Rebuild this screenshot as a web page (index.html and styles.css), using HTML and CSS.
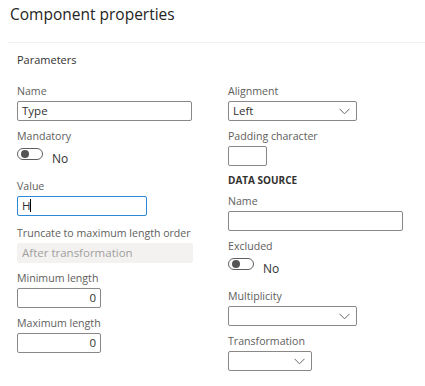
FILE: index.html
```html
<!DOCTYPE html>
<html lang="en">
<head>
    <meta charset="UTF-8">
    <meta name="viewport" content="width=device-width, initial-scale=1.0">
    <title>Component properties</title>
    <link rel="stylesheet" href="styles.css">
</head>
<body>
    <header class="pane-header">
        <h1>Component properties</h1>
    </header>

    <section class="params">
        <h2>Parameters</h2>
        <div class="columns">
            <div class="col">
                <div class="field">
                    <label>Name</label>
                    <div class="input w-name">Type</div>
                </div>
                <div class="field">
                    <label>Mandatory</label>
                    <div class="toggle-row">
                        <span class="toggle"><span class="knob"></span></span>
                        <span class="toggle-text">No</span>
                    </div>
                </div>
                <div class="field field-value">
                    <label>Value</label>
                    <div class="input focused w-value">H<span class="caret"></span></div>
                </div>
                <div class="field">
                    <label>Truncate to maximum length order</label>
                    <div class="input disabled w-trunc">After transformation</div>
                </div>
                <div class="field">
                    <label>Minimum length</label>
                    <div class="input number w-num">0</div>
                </div>
                <div class="field">
                    <label>Maximum length</label>
                    <div class="input number w-num">0</div>
                </div>
            </div>

            <div class="col">
                <div class="field">
                    <label>Alignment</label>
                    <div class="input select w-select">Left
                        <svg class="chevron" width="11" height="7" viewBox="0 0 11 7"><polyline points="0.5,0.8 5.5,5.8 10.5,0.8" fill="none" stroke="#666" stroke-width="1"/></svg>
                    </div>
                </div>
                <div class="field">
                    <label>Padding character</label>
                    <div class="input w-pad"></div>
                </div>
                <h3>DATA SOURCE</h3>
                <div class="field">
                    <label>Name</label>
                    <div class="input w-name"></div>
                </div>
                <div class="field">
                    <label>Excluded</label>
                    <div class="toggle-row">
                        <span class="toggle"><span class="knob"></span></span>
                        <span class="toggle-text">No</span>
                    </div>
                </div>
                <div class="field">
                    <label>Multiplicity</label>
                    <div class="input select w-select">
                        <svg class="chevron" width="11" height="7" viewBox="0 0 11 7"><polyline points="0.5,0.8 5.5,5.8 10.5,0.8" fill="none" stroke="#666" stroke-width="1"/></svg>
                    </div>
                </div>
                <div class="field">
                    <label>Transformation</label>
                    <div class="input select w-num">
                        <svg class="chevron" width="11" height="7" viewBox="0 0 11 7"><polyline points="0.5,0.8 5.5,5.8 10.5,0.8" fill="none" stroke="#666" stroke-width="1"/></svg>
                    </div>
                </div>
            </div>
        </div>
    </section>
</body>
</html>
```

FILE: styles.css
```css
body {
    margin: 0;
    font-family: "Open Sans", "Noto Sans", sans-serif;
    color: #323130;
    background-color: #fff;
}
.pane-header {
    margin-left: 8px;
    height: 42px;
    border-bottom: 1px solid #f0f0f0;
}
.pane-header h1 {
    margin: 0;
    padding: 3px 0 0 2px;
    font-size: 15.5px;
    font-weight: normal;
    line-height: 22px;
    color: #252423;
}
.params h2 {
    margin: 9px 0 0 17px;
    font-size: 11px;
    font-weight: normal;
    line-height: 16px;
    color: #323130;
}
.columns {
    display: grid;
    grid-template-columns: 211px 1fr;
    padding-left: 17px;
    margin-top: 15px;
}
.field {
    margin-bottom: 7px;
}
.field-value {
    margin-bottom: 9px;
}
.field label {
    display: block;
    font-size: 10.6px;
    line-height: 16px;
    margin-bottom: 2px;
    color: #605e5c;
}
.input {
    position: relative;
    box-sizing: border-box;
    height: 20px;
    border: 1px solid #8a8886;
    border-radius: 2px;
    padding: 0 4px;
    font-size: 11.5px;
    line-height: 18px;
    color: #323130;
}
.input.focused {
    border-color: #2b88d8;
}
.input.disabled {
    border-color: #f3f2f1;
    background-color: #f3f2f1;
    color: #a19f9d;
}
.input.number {
    text-align: right;
}
.caret {
    display: inline-block;
    width: 1px;
    height: 13px;
    background-color: #000;
    vertical-align: -2px;
}
.chevron {
    position: absolute;
    right: 6px;
    top: 6px;
}
.w-name { width: 175px; }
.w-value { width: 130px; }
.w-trunc { width: 176px; }
.w-num { width: 84px; }
.w-select { width: 129px; }
.w-pad { width: 39px; }
.toggle-row {
    display: flex;
    align-items: flex-start;
    height: 25px;
}
.toggle {
    box-sizing: border-box;
    margin-top: 2px;
    width: 26px;
    height: 12px;
    border: 1px solid #605e5c;
    border-radius: 6px;
    padding: 1px 0 0 3px;
}
.knob {
    display: block;
    width: 8px;
    height: 8px;
    border-radius: 50%;
    background-color: #555;
}
.toggle-text {
    margin-left: 9px;
    margin-top: 6px;
    font-size: 12px;
    line-height: 14px;
    color: #323130;
}
.col h3 {
    margin: 0 0 6px;
    font-size: 10px;
    font-weight: bold;
    line-height: 14px;
    color: #323130;
}
```
